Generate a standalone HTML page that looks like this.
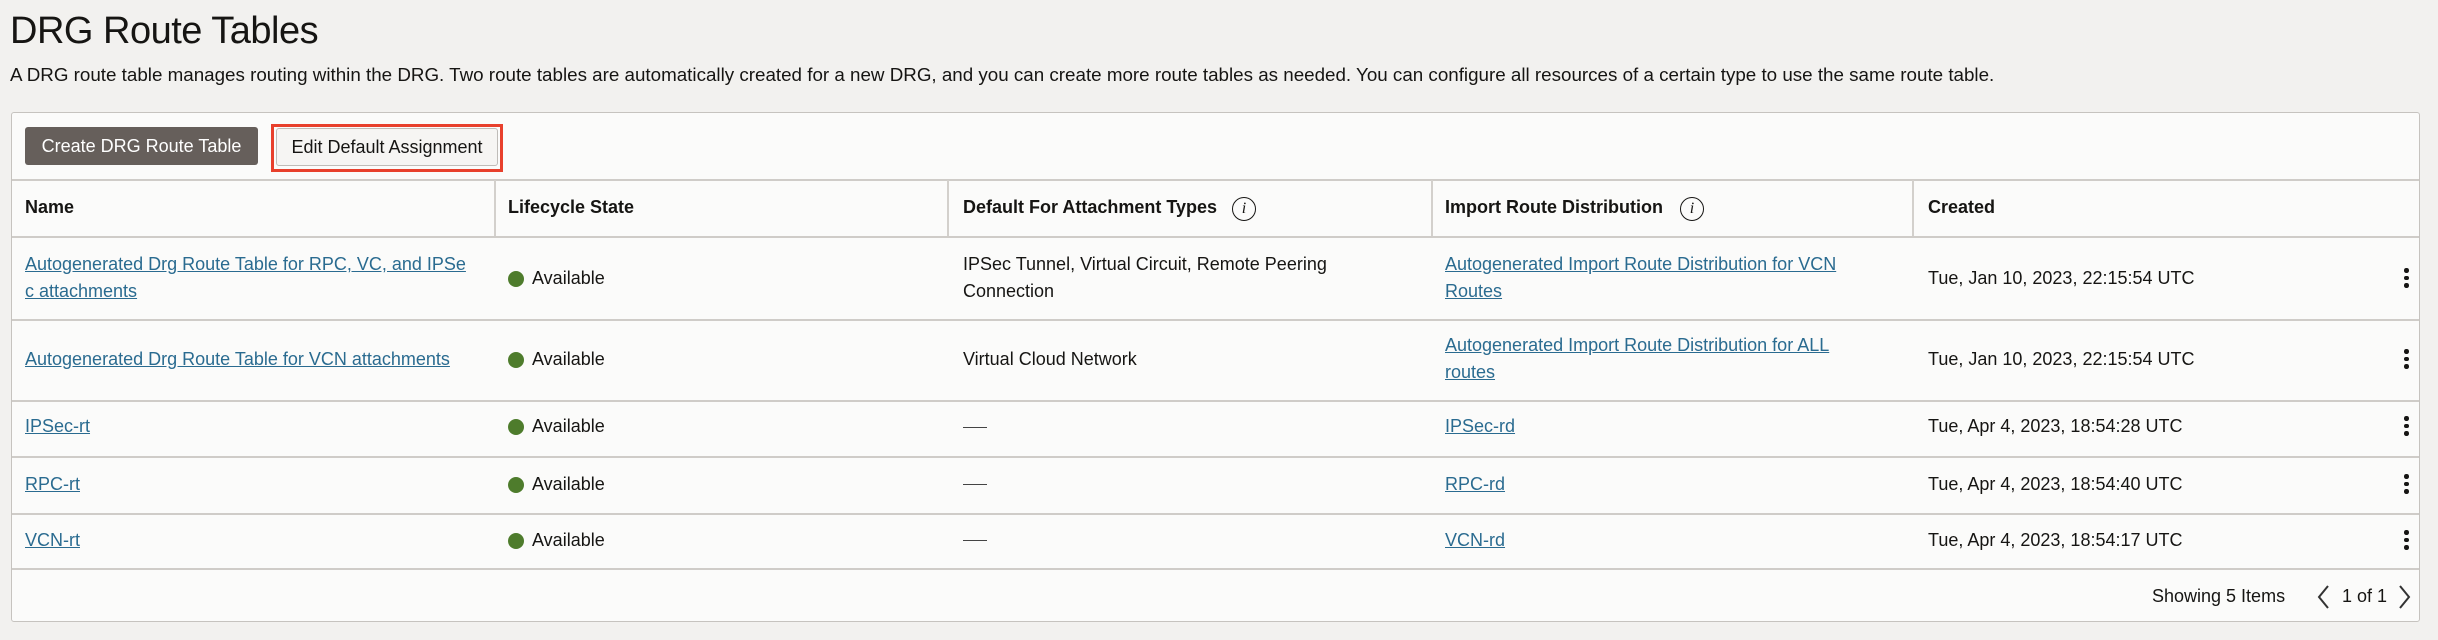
<!DOCTYPE html>
<html><head><meta charset="utf-8"><style>
*{margin:0;padding:0;box-sizing:border-box}
html,body{width:2438px;height:640px;overflow:hidden}
body{background:#f2f1ef;font-family:"Liberation Sans",sans-serif;color:#161513;position:relative}
.a{position:absolute;white-space:nowrap}
h1{position:absolute;left:10px;top:10px;font-size:38px;font-weight:normal;letter-spacing:-0.5px}
.desc{left:10px;top:64px;font-size:18.8px}
.panel{position:absolute;left:11px;top:112px;width:2409px;height:510px;background:#fbfbfa;border:1px solid #c6c3bf;border-radius:3px}
.btn1{left:25px;top:127px;width:233px;height:38px;background:#665f5b;color:#fff;border-radius:3px;font-size:18px;line-height:38px;text-align:center}
.red{left:271px;top:124px;width:232px;height:48px;border:3px solid #e8402c}
.btn2{left:276px;top:128px;width:222px;height:38px;background:#f6f5f3;border:1px solid #bfbcb8;border-radius:3px;font-size:18px;line-height:36px;text-align:center}
.hl{position:absolute;left:12px;width:2407px;height:2px;background:#cfccc8}
.vl{position:absolute;top:180px;height:56px;width:2px;background:#d3d0cc}
.th{font-size:18px;font-weight:bold;top:197px}
.td{font-size:18px;line-height:27px}
a{color:#2a6b90;text-decoration:underline}
.dot{position:absolute;width:16px;height:16px;border-radius:50%;background:#4e7c2c}
.info{position:absolute;width:24px;height:24px;border:1.5px solid #161513;border-radius:50%;font-style:italic;font-family:"Liberation Serif",serif;font-size:16px;line-height:21px;text-align:center}
.keb{position:absolute;left:2404px;width:5px}
.keb i{display:block;width:4.5px;height:4.5px;border-radius:50%;background:#161513;margin-bottom:3px}
.dash{position:absolute;left:963px;width:24px;height:1px;background:#444}
</style></head><body>
<h1>DRG Route Tables</h1>
<div class="a desc">A DRG route table manages routing within the DRG. Two route tables are automatically created for a new DRG, and you can create more route tables as needed. You can configure all resources of a certain type to use the same route table.</div>
<div class="panel"></div>
<div class="a btn1">Create DRG Route Table</div>
<div class="a btn2">Edit Default Assignment</div>
<div class="a red"></div>

<div class="hl" style="top:179px"></div>
<div class="hl" style="top:236px"></div>
<div class="hl" style="top:319px"></div>
<div class="hl" style="top:400px"></div>
<div class="hl" style="top:456px"></div>
<div class="hl" style="top:513px"></div>
<div class="hl" style="top:568px"></div>
<div class="vl" style="left:494px"></div>
<div class="vl" style="left:947px"></div>
<div class="vl" style="left:1431px"></div>
<div class="vl" style="left:1912px"></div>

<div class="a th" style="left:25px">Name</div>
<div class="a th" style="left:508px">Lifecycle State</div>
<div class="a th" style="left:963px">Default For Attachment Types</div>
<div class="info" style="left:1232px;top:197px">i</div>
<div class="a th" style="left:1445px">Import Route Distribution</div>
<div class="info" style="left:1680px;top:197px">i</div>
<div class="a th" style="left:1928px">Created</div>

<!-- row1 -->
<div class="a td" style="left:25px;top:251px"><a>Autogenerated Drg Route Table for RPC, VC, and IPSe<br>c attachments</a></div>
<div class="dot" style="left:508px;top:271px"></div><div class="a td" style="left:532px;top:265px">Available</div>
<div class="a td" style="left:963px;top:251px">IPSec Tunnel, Virtual Circuit, Remote Peering<br>Connection</div>
<div class="a td" style="left:1445px;top:251px"><a>Autogenerated Import Route Distribution for VCN<br>Routes</a></div>
<div class="a td" style="left:1928px;top:265px">Tue, Jan 10, 2023, 22:15:54 UTC</div>
<div class="keb" style="top:268px"><i></i><i></i><i></i></div>
<!-- row2 -->
<div class="a td" style="left:25px;top:346px"><a>Autogenerated Drg Route Table for VCN attachments</a></div>
<div class="dot" style="left:508px;top:352px"></div><div class="a td" style="left:532px;top:346px">Available</div>
<div class="a td" style="left:963px;top:346px">Virtual Cloud Network</div>
<div class="a td" style="left:1445px;top:332px"><a>Autogenerated Import Route Distribution for ALL<br>routes</a></div>
<div class="a td" style="left:1928px;top:346px">Tue, Jan 10, 2023, 22:15:54 UTC</div>
<div class="keb" style="top:349px"><i></i><i></i><i></i></div>
<!-- row3 -->
<div class="a td" style="left:25px;top:413px"><a>IPSec-rt</a></div>
<div class="dot" style="left:508px;top:419px"></div><div class="a td" style="left:532px;top:413px">Available</div>
<div class="dash" style="top:427px"></div>
<div class="a td" style="left:1445px;top:413px"><a>IPSec-rd</a></div>
<div class="a td" style="left:1928px;top:413px">Tue, Apr 4, 2023, 18:54:28 UTC</div>
<div class="keb" style="top:416px"><i></i><i></i><i></i></div>
<!-- row4 -->
<div class="a td" style="left:25px;top:471px"><a>RPC-rt</a></div>
<div class="dot" style="left:508px;top:477px"></div><div class="a td" style="left:532px;top:471px">Available</div>
<div class="dash" style="top:484px"></div>
<div class="a td" style="left:1445px;top:471px"><a>RPC-rd</a></div>
<div class="a td" style="left:1928px;top:471px">Tue, Apr 4, 2023, 18:54:40 UTC</div>
<div class="keb" style="top:474px"><i></i><i></i><i></i></div>
<!-- row5 -->
<div class="a td" style="left:25px;top:527px"><a>VCN-rt</a></div>
<div class="dot" style="left:508px;top:533px"></div><div class="a td" style="left:532px;top:527px">Available</div>
<div class="dash" style="top:540px"></div>
<div class="a td" style="left:1445px;top:527px"><a>VCN-rd</a></div>
<div class="a td" style="left:1928px;top:527px">Tue, Apr 4, 2023, 18:54:17 UTC</div>
<div class="keb" style="top:530px"><i></i><i></i><i></i></div>

<div class="a td" style="left:2152px;top:583px">Showing 5 Items</div>
<svg class="a" style="left:2316px;top:584px" width="14" height="26" viewBox="0 0 14 26"><path d="M12 2 L3 13 L12 24" fill="none" stroke="#333" stroke-width="2"/></svg>
<div class="a td" style="left:2342px;top:583px">1 of 1</div>
<svg class="a" style="left:2398px;top:584px" width="14" height="26" viewBox="0 0 14 26"><path d="M2 2 L11 13 L2 24" fill="none" stroke="#333" stroke-width="2"/></svg>
</body></html>
